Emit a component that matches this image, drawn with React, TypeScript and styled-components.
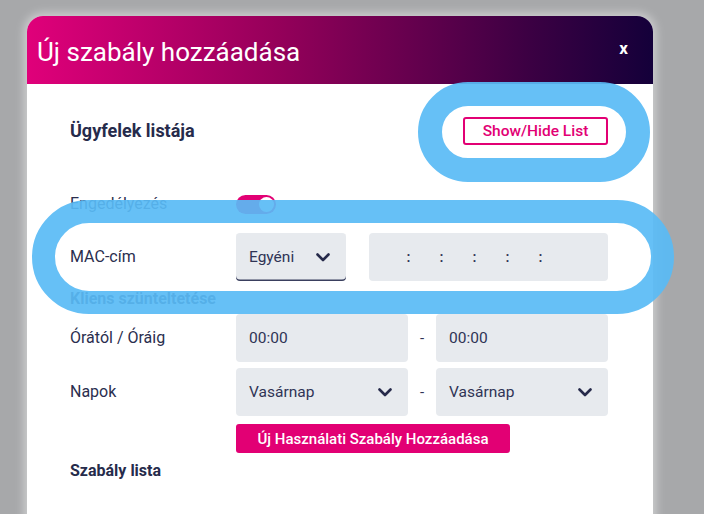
import React from "react";
import styled, { createGlobalStyle } from "styled-components";

const Global = createGlobalStyle`
  html, body { margin: 0; padding: 0; }
  body { font-family: Roboto, "Noto Sans", Arial, sans-serif; background: #a7a8aa; }
`;

const Page = styled.div`
  position: relative;
  width: 704px;
  height: 514px;
  overflow: hidden;
  background: #a7a8aa;
  padding: 16px 0 0 27px;
  box-sizing: border-box;
`;

const Modal = styled.div`
  width: 626px;
  min-height: 520px;
  background: #fff;
  border-radius: 16px 16px 0 0;
  box-shadow: 0 0 10px 3px rgba(255, 255, 255, 0.45);
  overflow: hidden;
`;

const Header = styled.div`
  height: 68px;
  display: flex;
  align-items: center;
  justify-content: space-between;
  padding: 0 25px 0 10px;
  background: linear-gradient(90deg, #e0007a 0%, #95005a 40%, #3c0043 80%, #14003a 100%);
  color: #fff;
`;

const Title = styled.h1`
  margin: 4px 0 0;
  font-size: 26px;
  font-weight: 400;
  line-height: 30px;
`;

const Close = styled.span`
  font-size: 17px;
  font-weight: 700;
  line-height: 1;
  margin-top: -4px;
`;

const Body = styled.div`
  padding: 33px 45px 0 43px;
  color: #262a4a;
`;

const TopRow = styled.div`
  display: flex;
  align-items: center;
  justify-content: space-between;
  height: 28px;
`;

const Heading = styled.div<{ $mt?: number; $size?: number }>`
  font-size: ${(p) => p.$size ?? 16}px;
  font-weight: 700;
  line-height: 20px;
  color: #262b4b;
  margin-top: ${(p) => p.$mt ?? 0}px;
`;

const OutlineButton = styled.button`
  width: 145px;
  height: 28px;
  border: 2px solid #e20074;
  border-radius: 3px;
  background: #fff;
  color: #e20074;
  font-family: inherit;
  font-size: 15.5px;
  font-weight: 500;
  padding: 0;
`;

const Row = styled.div<{ $mt: number; $h: number }>`
  display: grid;
  grid-template-columns: 166px 1fr;
  align-items: center;
  height: ${(p) => p.$h}px;
  margin-top: ${(p) => p.$mt}px;
`;

const Label = styled.div`
  font-size: 16px;
  line-height: 20px;
  color: #2a2e4e;
`;

const Toggle = styled.div`
  position: relative;
  width: 40px;
  height: 19px;
  border-radius: 10px;
  background: #e20074;
  &::after {
    content: "";
    position: absolute;
    right: 2px;
    top: 2px;
    width: 15px;
    height: 15px;
    border-radius: 50%;
    background: #fff;
  }
`;

const Fields = styled.div`
  display: flex;
  align-items: center;
  height: 100%;
`;

const Box = styled.div<{ $w: number; $select?: boolean }>`
  box-sizing: border-box;
  width: ${(p) => p.$w}px;
  height: 48px;
  background: #e7eaee;
  border-radius: 4px;
  display: flex;
  align-items: center;
  justify-content: space-between;
  padding: 0 16px 0 13px;
  font-size: 15.5px;
  color: #2f3455;
  box-shadow: ${(p) => (p.$select ? "inset 0 -1.5px 0 #3a3f5e" : "none")};
`;

const Dash = styled.span`
  width: 28px;
  text-align: center;
  font-size: 15px;
  color: #2f3455;
`;

const MacBox = styled.div`
  box-sizing: border-box;
  width: 239px;
  height: 48px;
  margin-left: 23px;
  background: #e7eaee;
  border-radius: 4px;
  display: flex;
  align-items: center;
  padding-left: 10px;
`;

const MacSeg = styled.span`
  width: 26px;
`;

const Colon = styled.span`
  width: 7px;
  text-align: center;
  font-size: 15px;
  font-weight: 500;
  color: #2f3455;
`;

const PrimaryButton = styled.button`
  display: block;
  margin: 8px 0 0 166px;
  width: 274px;
  height: 29px;
  border: none;
  border-radius: 3px;
  background: #e20074;
  color: #fff;
  font-family: inherit;
  font-size: 15px;
  font-weight: 500;
  padding: 0;
`;

const Highlight = styled.div<{ $x: number; $y: number; $w: number; $h: number; $b: number }>`
  position: absolute;
  left: ${(p) => p.$x}px;
  top: ${(p) => p.$y}px;
  width: ${(p) => p.$w}px;
  height: ${(p) => p.$h}px;
  box-sizing: border-box;
  border: ${(p) => p.$b}px solid rgba(89, 187, 245, 0.92);
  border-radius: ${(p) => p.$h / 2}px;
  pointer-events: none;
`;

const Chevron = () => (
  <svg width="14" height="9" viewBox="0 0 14 9" fill="none">
    <path d="M1.5 1.5 L7 7 L12.5 1.5" stroke="#262a4a" strokeWidth="2.6" strokeLinecap="round" strokeLinejoin="round" />
  </svg>
);

export default function App() {
  return (
    <>
      <Global />
      <Page>
        <Modal>
          <Header>
            <Title>Új szabály hozzáadása</Title>
            <Close>x</Close>
          </Header>
          <Body>
            <TopRow>
              <Heading $size={18}>Ügyfelek listája</Heading>
              <OutlineButton>Show/Hide List</OutlineButton>
            </TopRow>
            <Row $mt={49} $h={20}>
              <Label>Engedélyezés</Label>
              <Toggle />
            </Row>
            <Row $mt={19} $h={48}>
              <Label>MAC-cím</Label>
              <Fields>
                <Box $w={110} $select>
                  <span>Egyéni</span>
                  <Chevron />
                </Box>
                <MacBox>
                  {[0, 1, 2, 3, 4].map((i) => (
                    <React.Fragment key={i}>
                      <MacSeg />
                      <Colon>:</Colon>
                    </React.Fragment>
                  ))}
                </MacBox>
              </Fields>
            </Row>
            <Heading $mt={8}>Kliens szünteltetése</Heading>
            <Row $mt={5} $h={48}>
              <Label>Órától / Óráig</Label>
              <Fields>
                <Box $w={172}>00:00</Box>
                <Dash>-</Dash>
                <Box $w={172}>00:00</Box>
              </Fields>
            </Row>
            <Row $mt={6} $h={48}>
              <Label>Napok</Label>
              <Fields>
                <Box $w={172}>
                  <span>Vasárnap</span>
                  <Chevron />
                </Box>
                <Dash>-</Dash>
                <Box $w={172}>
                  <span>Vasárnap</span>
                  <Chevron />
                </Box>
              </Fields>
            </Row>
            <PrimaryButton>Új Használati Szabály Hozzáadása</PrimaryButton>
            <Heading $mt={8}>Szabály lista</Heading>
          </Body>
        </Modal>
        <Highlight $x={418} $y={82} $w={232} $h={100} $b={24} />
        <Highlight $x={32} $y={200} $w={642} $h={114} $b={23} />
      </Page>
    </>
  );
}
